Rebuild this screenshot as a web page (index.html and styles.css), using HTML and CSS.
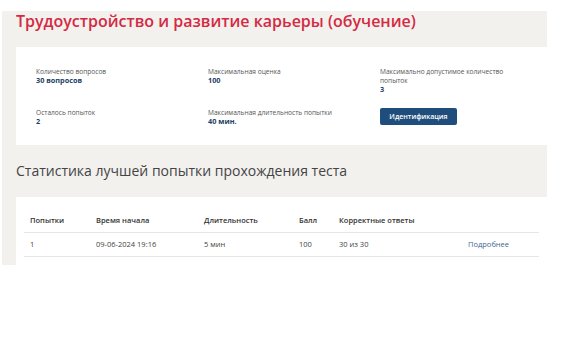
FILE: index.html
```html
<!doctype html>
<html lang="ru">
  <head>
    <meta charset="UTF-8" />
    <meta name="viewport" content="width=device-width, initial-scale=1.0" />
    <title>Трудоустройство и развитие карьеры (обучение)</title>
    <link rel="stylesheet" href="styles.css">
  </head>
  <body>
    <div class="page">
      <h1 class="title">Трудоустройство и развитие карьеры (обучение)</h1>

      <div class="card info">
        <div class="field">
          <div class="label">Количество вопросов</div>
          <div class="value">30 вопросов</div>
        </div>
        <div class="field">
          <div class="label">Максимальная оценка</div>
          <div class="value">100</div>
        </div>
        <div class="field narrow">
          <div class="label">Максимально допустимое количество попыток</div>
          <div class="value">3</div>
        </div>
        <div class="field">
          <div class="label">Осталось попыток</div>
          <div class="value">2</div>
        </div>
        <div class="field">
          <div class="label">Максимальная длительность попытки</div>
          <div class="value">40 мин.</div>
        </div>
        <div class="field">
          <button class="btn">Идентификация</button>
        </div>
      </div>

      <h2 class="subtitle">Статистика лучшей попытки прохождения теста</h2>

      <div class="card results">
        <table class="attempts">
          <thead>
            <tr>
              <th class="col-num">Попытки</th>
              <th class="col-start">Время начала</th>
              <th class="col-dur">Длительность</th>
              <th class="col-score">Балл</th>
              <th class="col-correct">Корректные ответы</th>
              <th></th>
            </tr>
          </thead>
          <tbody>
            <tr>
              <td>1</td>
              <td>09-06-2024 19:16</td>
              <td>5 мин</td>
              <td>100</td>
              <td>30 из 30</td>
              <td><a href="#" class="more">Подробнее</a></td>
            </tr>
          </tbody>
        </table>
      </div>
    </div>
  </body>
</html>
```

FILE: styles.css
```css
body {
  margin: 0;
  font-family: "Open Sans", "Noto Sans", sans-serif;
  color: #333;
  background: #fff;
}
.page {
  background: #f2f1ee;
  margin: 11px 20px 0 2px;
  padding-left: 14px;
}
.title {
  margin: 0;
  height: 36px;
  font-size: 16px;
  font-weight: 600;
  line-height: 20px;
  color: #d42a43;
}
.card {
  background: #fff;
}
.info {
  display: grid;
  grid-template-columns: 172px 172px 1fr;
  row-gap: 14px;
  padding: 20px 20px 19px;
  line-height: 9px;
}
.label {
  font-size: 6.6px;
  color: #555;
}
.narrow .label {
  max-width: 140px;
}
.value {
  font-size: 7.3px;
  font-weight: 700;
  color: #243f66;
}
.btn {
  background: #1f4e7d;
  color: #fff;
  border: none;
  border-radius: 2px;
  width: 77px;
  height: 17px;
  padding: 0;
  font-family: inherit;
  font-size: 7px;
  font-weight: 600;
  cursor: pointer;
}
.subtitle {
  margin: 0;
  height: 52px;
  font-size: 14px;
  font-weight: 400;
  line-height: 52px;
  color: #444;
}
.results {
  height: 68px;
  box-sizing: border-box;
  padding: 11px 8px 0;
}
.attempts {
  width: 100%;
  border-collapse: collapse;
  font-size: 7.5px;
  text-align: left;
}
.attempts th,
.attempts td {
  height: 24px;
  padding: 0 6px;
  box-sizing: border-box;
}
.attempts th {
  font-weight: 600;
  color: #333;
  border-bottom: 1px solid #e6e6e6;
}
.attempts td {
  color: #444;
  border-bottom: 1px solid #e6e6e6;
}
.col-num { width: 66px; }
.col-start { width: 108px; }
.col-dur { width: 95px; }
.col-score { width: 40px; }
.col-correct { width: 129px; }
.more {
  color: #41688f;
  text-decoration: none;
}
```
